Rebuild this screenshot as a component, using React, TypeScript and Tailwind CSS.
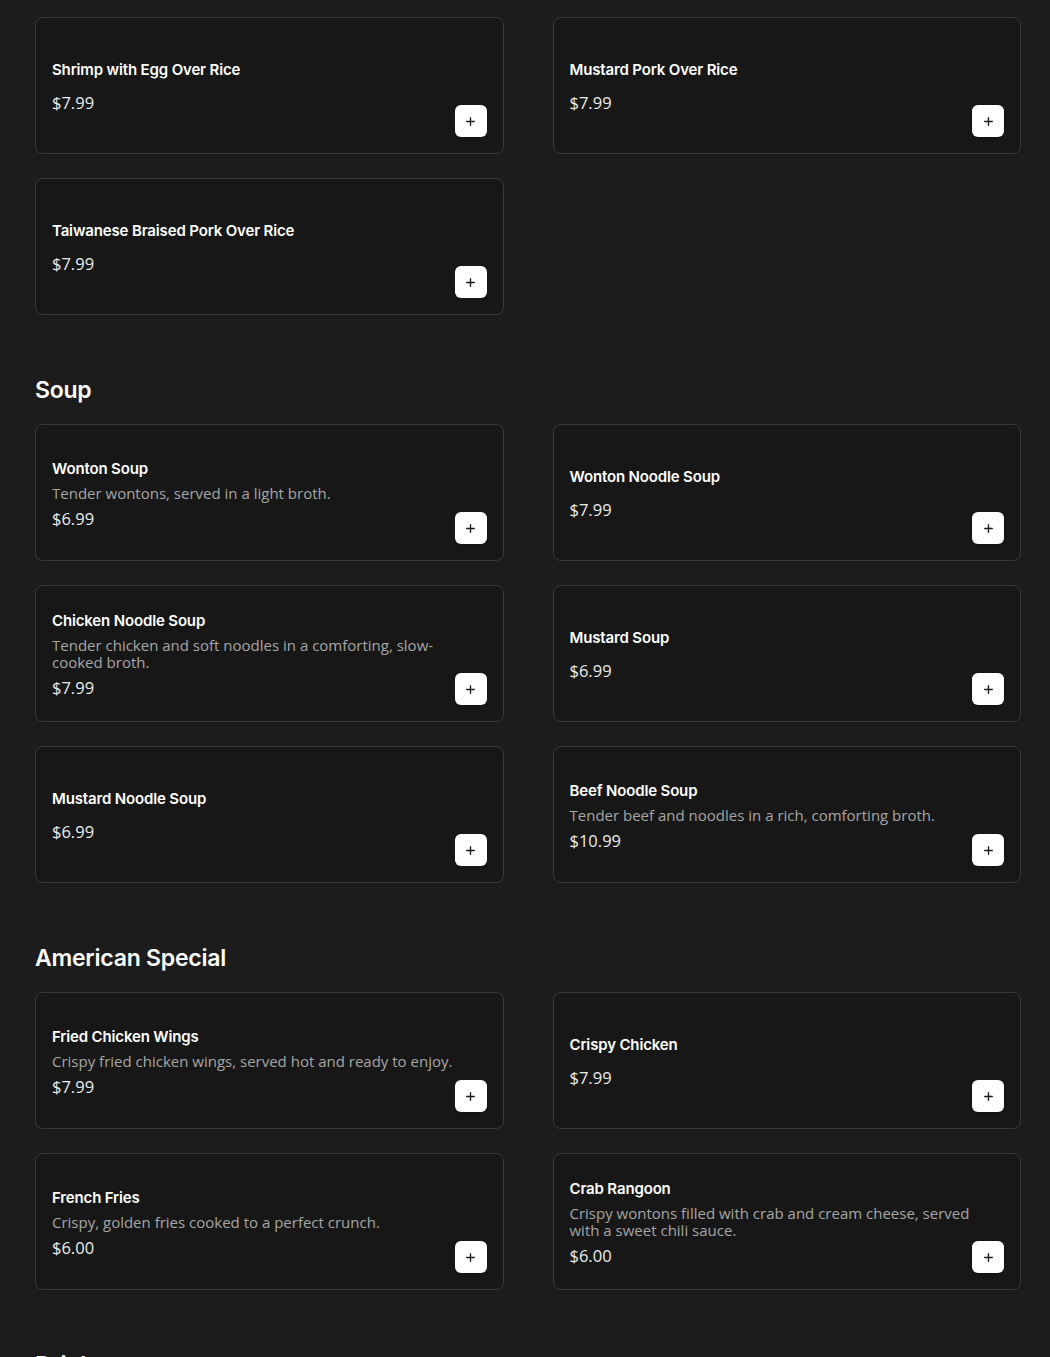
import React from 'react';
import { Plus } from 'lucide-react';

type Item = { name: string; desc?: string; price: string };

const sections: { title?: string; items: Item[] }[] = [
  {
    items: [
      { name: 'Shrimp with Egg Over Rice', price: '$7.99' },
      { name: 'Mustard Pork Over Rice', price: '$7.99' },
      { name: 'Taiwanese Braised Pork Over Rice', price: '$7.99' },
    ],
  },
  {
    title: 'Soup',
    items: [
      { name: 'Wonton Soup', desc: 'Tender wontons, served in a light broth.', price: '$6.99' },
      { name: 'Wonton Noodle Soup', price: '$7.99' },
      { name: 'Chicken Noodle Soup', desc: 'Tender chicken and soft noodles in a comforting, slow-cooked broth.', price: '$7.99' },
      { name: 'Mustard Soup', price: '$6.99' },
      { name: 'Mustard Noodle Soup', price: '$6.99' },
      { name: 'Beef Noodle Soup', desc: 'Tender beef and noodles in a rich, comforting broth.', price: '$10.99' },
    ],
  },
  {
    title: 'American Special',
    items: [
      { name: 'Fried Chicken Wings', desc: 'Crispy fried chicken wings, served hot and ready to enjoy.', price: '$7.99' },
      { name: 'Crispy Chicken', price: '$7.99' },
      { name: 'French Fries', desc: 'Crispy, golden fries cooked to a perfect crunch.', price: '$6.00' },
      { name: 'Crab Rangoon', desc: 'Crispy wontons filled with crab and cream cheese, served with a sweet chili sauce.', price: '$6.00' },
    ],
  },
  {
    title: 'Drinks',
    items: [],
  },
];

function MenuCard({ item }: { item: Item }) {
  return (
    <div className="relative h-[137px] flex items-center rounded-lg border border-[#3a3a3a] bg-[#171717] p-4">
      <div className="flex-1 pr-[14px] min-w-0">
        <div className="text-[15px] leading-6 font-semibold text-white font-['Inter',sans-serif] tracking-[-0.01em]">
          {item.name}
        </div>
        {item.desc && (
          <p className="mt-1 text-[15px] leading-[17px] text-[#a6a6a6] font-['Open_Sans',sans-serif]">{item.desc}</p>
        )}
        <div className={`${item.desc ? 'mt-[7px]' : 'mt-[11px]'} text-[16.5px] leading-5 text-[#ececec] font-['Open_Sans',sans-serif]`}>
          {item.price}
        </div>
      </div>
      {/* add button floats in the card's bottom-right corner */}
      <button
        type="button"
        className="absolute bottom-4 right-4 w-8 h-8 rounded-md bg-white flex items-center justify-center shadow-sm"
      >
        <Plus size={13} strokeWidth={2.5} className="text-[#1a1a1a]" />
      </button>
    </div>
  );
}

export default function App() {
  return (
    <div className="min-h-[1357px] bg-[#1c1c1c] pl-[35px] pr-[29px] pt-[17px] pb-10 font-['Inter',sans-serif]">
      {sections.map((section, idx) => (
        <section key={idx} className={idx > 0 ? 'mt-[59px]' : ''}>
          {section.title && (
            <h2 className="text-[23px] leading-8 font-semibold text-white mb-[18px] tracking-[-0.01em]">
              {section.title}
            </h2>
          )}
          {section.items.length > 0 && (
            <div className="grid grid-cols-2 gap-x-[49px] gap-y-[24px]">
              {section.items.map((item) => (
                <MenuCard key={item.name} item={item} />
              ))}
            </div>
          )}
        </section>
      ))}
    </div>
  );
}
